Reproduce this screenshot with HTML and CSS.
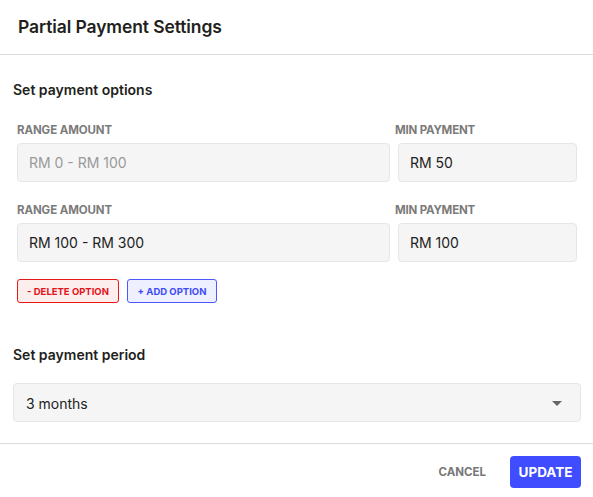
FILE: index.html
```html
<!DOCTYPE html>
<html>
<head>
<meta charset="utf-8">
<link rel="stylesheet" href="styles.css">
</head>
<body>
<div class="dialog">
  <div class="header"><h1 class="title">Partial Payment Settings</h1></div>
  <div class="content">
    <h2 class="section-title">Set payment options</h2>
    <div class="options">
      <div class="option-row">
        <div class="field range">
          <label class="label">RANGE AMOUNT</label>
          <div class="input disabled">RM 0 - RM 100</div>
        </div>
        <div class="field min">
          <label class="label label-min">MIN PAYMENT</label>
          <div class="input">RM 50</div>
        </div>
      </div>
      <div class="option-row">
        <div class="field range">
          <label class="label">RANGE AMOUNT</label>
          <div class="input">RM 100 - RM 300</div>
        </div>
        <div class="field min">
          <label class="label label-min">MIN PAYMENT</label>
          <div class="input">RM 100</div>
        </div>
      </div>
      <div class="option-actions">
        <button class="chip chip-delete">- DELETE OPTION</button>
        <button class="chip chip-add">+ ADD OPTION</button>
      </div>
    </div>
    <h2 class="section-title period-title">Set payment period</h2>
    <div class="select">
      <span>3 months</span>
      <span class="caret"></span>
    </div>
  </div>
  <div class="footer">
    <button class="btn-cancel">CANCEL</button>
    <button class="btn-update">UPDATE</button>
  </div>
</div>
</body>
</html>
```
FILE: styles.css
```css
* { box-sizing: border-box; }
html, body { margin: 0; padding: 0; background: #fff; }
body { font-family: Inter, "Noto Sans", sans-serif; color: #222; }

.dialog { width: 593px; }

.header {
  height: 55px;
  border-bottom: 1px solid #dcdcdc;
  padding: 0 18px;
  display: flex;
  align-items: center;
}
.title {
  margin: 0 0 2px 0;
  font-size: 17.5px;
  font-weight: 600;
  color: #231f20;
  letter-spacing: -0.1px;
}

.content { padding: 25px 12px 21px 13px; }

.section-title {
  margin: 0;
  font-size: 14px;
  line-height: 20px;
  font-weight: 600;
  color: #231f20;
}

.options { padding: 24px 4px 0 4px; }

.option-row {
  display: flex;
  gap: 8px;
  margin-bottom: 22px;
}
.field { display: flex; flex-direction: column; }
.range { flex: 0 0 373px; }
.min { flex: 1; }

.label {
  font-size: 11.5px;
  line-height: 13px;
  font-weight: 700;
  color: #7b7b7b;
  margin-bottom: 6px;
  letter-spacing: -0.1px;
}
.label-min { margin-left: -3px; letter-spacing: -0.2px; }

.input {
  height: 39px;
  background: #f5f5f5;
  border: 1px solid #e6e6e6;
  border-radius: 4px;
  padding: 0 11px;
  display: flex;
  align-items: center;
  font-size: 14px;
  color: #222;
}
.input.disabled { color: #9a9a9a; }

.option-actions {
  display: flex;
  gap: 8px;
  margin-top: -5px;
}
.chip {
  height: 24px;
  border-radius: 3px;
  font-family: Inter, "Noto Sans", sans-serif;
  font-size: 9.5px;
  font-weight: 700;
  padding: 0;
  display: flex;
  align-items: center;
  justify-content: center;
}
.chip-delete {
  width: 102px;
  border: 1px solid #e81818;
  background: #fdeeee;
  color: #e0141a;
}
.chip-add {
  width: 90px;
  border: 1px solid #4c58ff;
  background: #eef0ff;
  color: #3f4cf5;
}

.period-title { margin-top: 42px; }

.select {
  margin-top: 18px;
  height: 39px;
  background: #f5f5f5;
  border: 1px solid #e6e6e6;
  border-radius: 4px;
  padding: 1px 18px 0 12px;
  display: flex;
  align-items: center;
  justify-content: space-between;
  font-size: 14px;
  color: #222;
}
.caret {
  width: 0;
  height: 0;
  border-left: 5px solid transparent;
  border-right: 5px solid transparent;
  border-top: 5px solid #666;
}

.footer {
  border-top: 1px solid #dcdcdc;
  height: 54px;
  padding: 12px 12px 0 0;
  display: flex;
  justify-content: flex-end;
  align-items: flex-start;
  gap: 24px;
}
.btn-cancel {
  height: 32px;
  border: none;
  background: none;
  padding: 0;
  font-family: Inter, "Noto Sans", sans-serif;
  font-size: 11.5px;
  font-weight: 700;
  color: #777;
}
.btn-update {
  width: 71px;
  height: 32px;
  border: none;
  border-radius: 4px;
  background: #3f4cff;
  color: #fff;
  font-family: Inter, "Noto Sans", sans-serif;
  font-size: 13.5px;
  font-weight: 700;
  padding: 0;
}
```
